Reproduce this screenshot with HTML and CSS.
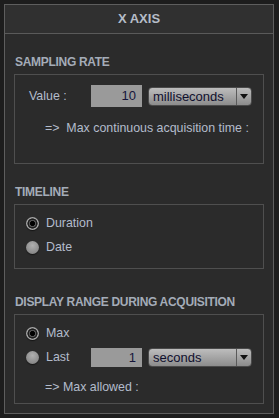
FILE: index.html
```html
<html>
  <head>
    <title>X Axis</title>
    <link rel="stylesheet" href="styles.css">
  </head>
  <body>
    <div class="panel">
      <div class="panel-header">X AXIS</div>

      <div class="section-title">SAMPLING RATE</div>
      <div class="box box-sampling">
        <div class="row">
          <span class="label">Value :</span>
          <div class="num-input tall">10</div>
          <div class="select">
            <span class="select-text">milliseconds</span>
            <span class="select-arrow"></span>
          </div>
        </div>
        <div class="note">=&gt;&nbsp; Max continuous acquisition time :</div>
      </div>

      <div class="section-title">TIMELINE</div>
      <div class="box box-timeline">
        <div class="radio-row"><span class="radio checked"></span><span class="radio-label">Duration</span></div>
        <div class="radio-row"><span class="radio"></span><span class="radio-label">Date</span></div>
      </div>

      <div class="section-title spaced">DISPLAY RANGE DURING ACQUISITION</div>
      <div class="box box-range">
        <div class="radio-row"><span class="radio checked"></span><span class="radio-label">Max</span></div>
        <div class="radio-row">
          <span class="radio"></span><span class="radio-label short">Last</span>
          <div class="num-input">1</div>
          <div class="select">
            <span class="select-text">seconds</span>
            <span class="select-arrow"></span>
          </div>
        </div>
        <div class="note">=&gt; Max allowed :</div>
      </div>
    </div>
  </body>
</html>
```

FILE: styles.css
```css
body {
  margin: 0;
  background-color: #1d1d1d;
  font-family: 'Liberation Sans', Arial, sans-serif;
  font-size: 12.4px;
  color: #b3bccb;
}

.panel {
  margin: 4px 0 0 4px;
  width: 268px;
  height: 408px;
  border: 1px solid #5e5e5e;
  background-color: #2b2b2b;
  box-sizing: content-box;
}

.panel-header {
  height: 28px;
  line-height: 28px;
  text-align: center;
  font-weight: bold;
  font-size: 13px;
  color: #b6bdc8;
  background-color: #303030;
  border-bottom: 1px solid #5a5a5a;
}

.section-title {
  margin: 20px 0 4px 10px;
  height: 16px;
  line-height: 16px;
  font-weight: bold;
  font-size: 12px;
  letter-spacing: -0.3px;
  color: #a4acb8;
}

.section-title.spaced {
  margin-top: 25px;
}

.box {
  margin: 0 9px;
  border: 1px solid #4f4f4f;
  box-sizing: border-box;
}

.box-sampling {
  height: 90px;
  padding: 10px 0 0 14px;
}

.box-timeline {
  height: 65px;
  padding: 6px 0 0 11px;
}

.box-range {
  height: 90px;
  padding: 6px 0 0 11px;
}

.row {
  display: flex;
  align-items: center;
}

.label {
  width: 62px;
}

.num-input {
  width: 51px;
  height: 19px;
  line-height: 19px;
  background-color: #9a9a9a;
  color: #16163a;
  text-align: right;
  padding-right: 6px;
  box-sizing: border-box;
  font-size: 13px;
}

.num-input.tall {
  height: 22px;
  line-height: 22px;
}

.select {
  margin-left: 6px;
  width: 104px;
  height: 19px;
  display: flex;
  border: 1px solid #4a4a4a;
  border-radius: 4px;
  background: linear-gradient(#bdbdbd, #8c8c8c);
  box-sizing: border-box;
  color: #10102e;
  font-size: 13px;
}

.select-text {
  flex: 1;
  line-height: 17px;
  padding-left: 4px;
}

.select-arrow {
  width: 14px;
  border-left: 1px solid #5a5a5a;
  position: relative;
}

.select-arrow::after {
  content: '';
  position: absolute;
  left: 3px;
  top: 6px;
  border-left: 4px solid transparent;
  border-right: 4px solid transparent;
  border-top: 5px solid #111;
}

.note {
  margin: 13px 0 0 16px;
  line-height: 16px;
}

.box-range .note {
  margin: 10px 0 0 19px;
}

.radio-row {
  display: flex;
  align-items: center;
  height: 24px;
}

.radio {
  width: 13px;
  height: 13px;
  border-radius: 50%;
  background: radial-gradient(circle at 50% 35%, #b0b0b0, #7a7a7a);
  box-shadow: 0 1px 1px #151515;
  box-sizing: border-box;
}

.radio.checked {
  background: radial-gradient(circle, #000 0 2.2px, #555 2.8px 3.4px, #1f1f1f 4px 4.8px, #a4a4a4 5.4px);
}

.radio-label {
  margin-left: 7px;
}

.radio-label.short {
  width: 45px;
}
```
